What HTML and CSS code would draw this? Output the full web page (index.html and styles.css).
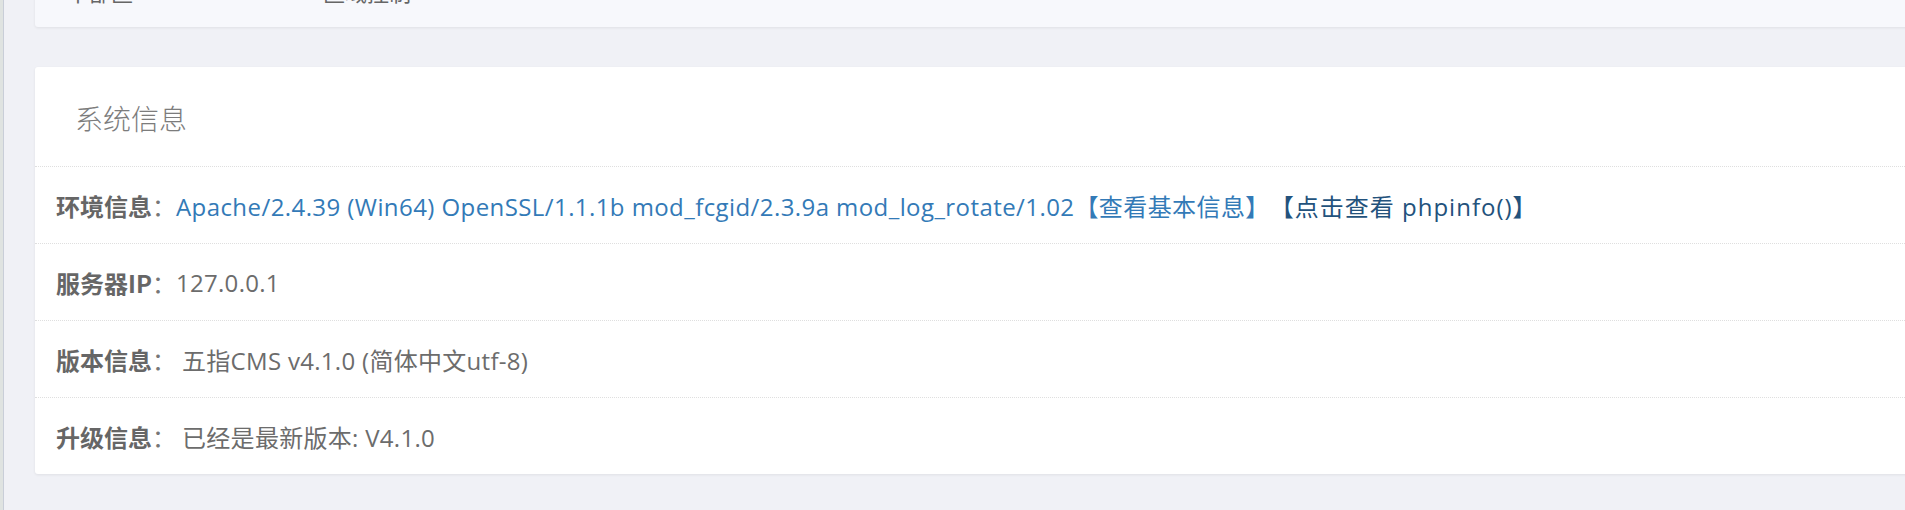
FILE: index.html
```html
<!DOCTYPE html>
<html lang="zh-CN">
<head>
<meta charset="utf-8">
<title>系统信息</title>
<link rel="stylesheet" href="styles.css">
</head>
<body>
<div class="frame">
  <div class="main">
    <div class="card card-top">
      <div class="top-row">
        <span class="top-a">中部区</span>
        <span class="top-b">区域控制</span>
      </div>
    </div>
    <div class="card card-info">
      <div class="card-head">系统信息</div>
      <div class="row"><b class="label">环境信息</b><span class="colon">：</span><a class="link">Apache/2.4.39 (Win64) OpenSSL/1.1.1b mod_fcgid/2.3.9a mod_log_rotate/1.02【查看基本信息】</a><a class="link dark">【点击查看 phpinfo()】</a></div>
      <div class="row"><b class="label">服务器IP</b><span class="colon">：</span><span class="val">127.0.0.1</span></div>
      <div class="row"><b class="label">版本信息</b><span class="colon">：</span><span class="val spaced">五指CMS v4.1.0 (简体中文utf-8)</span></div>
      <div class="row"><b class="label">升级信息</b><span class="colon">：</span><span class="val spaced">已经是最新版本: V4.1.0</span></div>
    </div>
  </div>
</div>
</body>
</html>
```
FILE: styles.css
```css
html, body {
  margin: 0;
  padding: 0;
  height: 100%;
  overflow: hidden;
}
body {
  background: #f0f1f6;
  font-family: "Open Sans", "Noto Sans CJK SC", sans-serif;
  color: #666;
}
.frame {
  height: 100%;
  border-left: 3px solid #dfe3e1;
  box-sizing: border-box;
}
.main {
  display: flow-root;
  height: 100%;
  border-left: 1px solid #c9ced8;
  padding-left: 31px;
}
.card {
  background: #fff;
  margin-right: -20px;
  border-radius: 3px;
  box-shadow: 0 1px 3px rgba(0, 0, 0, 0.07);
}
.card-top {
  background: #f7f8fc;
  margin-top: -40px;
  height: 67px;
  display: flex;
  align-items: flex-end;
  border-radius: 0 0 3px 3px;
}
.top-row {
  display: flex;
  font-family: "Noto Sans CJK SC", sans-serif;
  font-size: 22px;
  line-height: 22px;
  color: #666;
  padding-left: 32px;
  margin-bottom: 25px;
}
.top-b {
  margin-left: 190px;
}
.card-info {
  margin-top: 40px;
}
.card-head {
  height: 99px;
  box-sizing: border-box;
  padding: 2px 0 0 40px;
  display: flex;
  align-items: center;
  font-family: "Noto Sans CJK SC", sans-serif;
  font-weight: 300;
  font-size: 28px;
  color: #7c7c7c;
}
.row {
  height: 77px;
  box-sizing: border-box;
  border-top: 1px dotted #dfdfdf;
  display: flex;
  align-items: center;
  padding-left: 21px;
  font-size: 24px;
  white-space: nowrap;
}
.label {
  font-family: "Noto Sans CJK SC", sans-serif;
  font-weight: 700;
  color: #666;
}
.colon {
  font-family: "Noto Sans CJK SC", sans-serif;
  color: #777;
}
.val {
  color: #6c6c6c;
  letter-spacing: 0.3px;
}
.spaced {
  margin-left: 6px;
}
.link {
  color: #337ab7;
  letter-spacing: 0.42px;
}
.link.dark {
  color: #23527c;
  letter-spacing: 1px;
}
```
